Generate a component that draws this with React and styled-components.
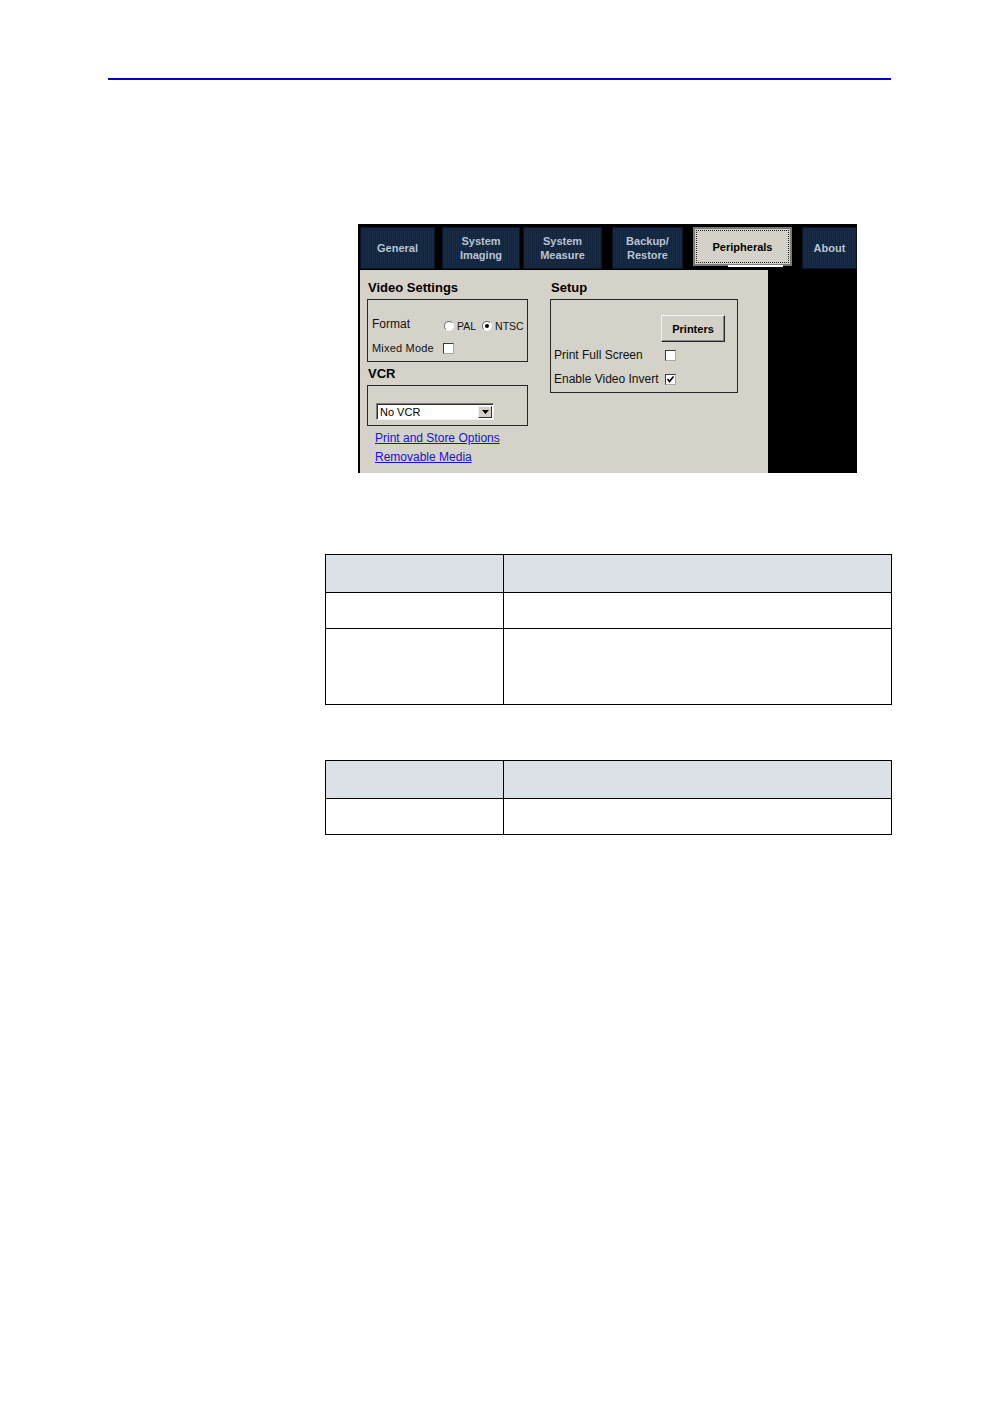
import React from 'react'
import styled, { createGlobalStyle } from 'styled-components'

const GlobalStyle = createGlobalStyle`
  html, body {
    margin: 0;
    padding: 0;
    background: #fff;
  }
  body {
    font-family: "Liberation Sans", Arial, sans-serif;
  }
`

const tabs = [
  { label: ['General'], left: 2, width: 75 },
  { label: ['System', 'Imaging'], left: 7, width: 78 },
  { label: ['System', 'Measure'], left: 3, width: 79 },
  { label: ['Backup/', 'Restore'], left: 10, width: 71 },
  { label: ['Peripherals'], left: 10, width: 99, active: true },
  { label: ['About'], left: 10, width: 55 },
]

function Radio({ checked, label }) {
  return (
    <RadioItem>
      <RadioDot checked={checked} />
      <SmallText>{label}</SmallText>
    </RadioItem>
  )
}

function Check({ checked }) {
  return (
    <CheckBox>
      {checked && (
        <svg width="9" height="9" viewBox="0 0 9 9">
          <polyline points="1.5,4 3.5,6.5 7.5,1.5" fill="none" stroke="#000" strokeWidth="1.6" />
        </svg>
      )}
    </CheckBox>
  )
}

function App() {
  return (
    <Page>
      <GlobalStyle />
      <Rule />
      <Shot>
        <TabStrip>
          {tabs.map((t) => (
            <Tab key={t.label.join(' ')} left={t.left} width={t.width} active={t.active}>
              {t.label.map((l) => (
                <span key={l}>{l}</span>
              ))}
            </Tab>
          ))}
        </TabStrip>
        <Body>
          <Panel>
            <Column>
              <GroupTitle>Video Settings</GroupTitle>
              <GroupBox padding="16px 4px 5px 4px" gap={8}>
                <Row>
                  <Label width={72}>Format</Label>
                  <RadioGroup>
                    <Radio label="PAL" />
                    <Radio checked label="NTSC" />
                  </RadioGroup>
                </Row>
                <Row>
                  <SmallLabel width={71}>Mixed Mode</SmallLabel>
                  <Check />
                </Row>
              </GroupBox>
              <GroupTitle top={3}>VCR</GroupTitle>
              <GroupBox padding="17px 8px 5px 8px">
                <Select>
                  <SelectText>No VCR</SelectText>
                  <SelectButton>
                    <svg width="7" height="4" viewBox="0 0 7 4">
                      <polygon points="0,0 7,0 3.5,4" fill="#000" />
                    </svg>
                  </SelectButton>
                </Select>
              </GroupBox>
              <Links>
                <Link href="#">Print and Store Options</Link>
                <Link href="#">Removable Media</Link>
              </Links>
            </Column>
            <Column width={188}>
              <GroupTitle>Setup</GroupTitle>
              <GroupBox padding="15px 12px 5px 3px" gap={8}>
                <ButtonRow>
                  <Button>Printers</Button>
                </ButtonRow>
                <Row top={-3}>
                  <Label width={111}>Print Full Screen</Label>
                  <Check />
                </Row>
                <Row>
                  <Label width={111}>Enable Video Invert</Label>
                  <Check checked />
                </Row>
              </GroupBox>
            </Column>
          </Panel>
          <BlackSide />
        </Body>
      </Shot>

      <Table top={81}>
        <tbody>
          <HeadRow>
            <Cell first />
            <Cell />
          </HeadRow>
          <BodyRow height={36}>
            <Cell first />
            <Cell />
          </BodyRow>
          <BodyRow height={76}>
            <Cell first />
            <Cell />
          </BodyRow>
        </tbody>
      </Table>

      <Table top={55}>
        <tbody>
          <HeadRow>
            <Cell first />
            <Cell />
          </HeadRow>
          <BodyRow height={36}>
            <Cell first />
            <Cell />
          </BodyRow>
        </tbody>
      </Table>
    </Page>
  )
}

export default App

const Page = styled.div`
  width: 998px;
  min-height: 1418px;
  background: #fff;
  padding-top: 78px;
  box-sizing: border-box;
  overflow: hidden;
`

const Rule = styled.div`
  margin-left: 108px;
  width: 783px;
  height: 2px;
  background: #0000cc;
`

const Shot = styled.div`
  margin: 144px 0 0 358px;
  width: 499px;
  height: 249px;
  background: #000;
  display: flex;
  flex-direction: column;
`

const TabStrip = styled.div`
  display: flex;
  padding-top: 3px;
  height: 46px;
  flex-shrink: 0;
  box-sizing: border-box;
`

const Tab = styled.div`
  position: relative;
  margin-left: ${(p) => p.left}px;
  width: ${(p) => p.width}px;
  height: ${(p) => (p.active ? 39 : 42)}px;
  box-sizing: border-box;
  display: flex;
  flex-direction: column;
  align-items: center;
  justify-content: center;
  font-size: 11px;
  font-weight: bold;
  line-height: 14px;
  color: ${(p) => (p.active ? '#000' : '#b8c5d4')};
  background: ${(p) =>
    p.active
      ? '#d4d1c8'
      : 'repeating-linear-gradient(90deg, #13243c 0 1px, #192c46 1px 2px)'};
  border: ${(p) => (p.active ? '2px solid #7b7b78' : '1px solid #0a1424')};
  outline: ${(p) => (p.active ? '1px dotted #222' : 'none')};
  outline-offset: -4px;

  &::after {
    content: '';
    display: ${(p) => (p.active ? 'block' : 'none')};
    position: absolute;
    left: 33px;
    bottom: -3px;
    width: 55px;
    height: 2px;
    background: #fff;
  }
`

const Body = styled.div`
  flex: 1;
  display: flex;
  padding-left: 2px;
`

const Panel = styled.div`
  width: 408px;
  background: #d5d2ca;
  display: flex;
  gap: 22px;
  padding: 9px 0 0 7px;
  box-sizing: border-box;
`

const BlackSide = styled.div`
  flex: 1;
  background: #000;
`

const Column = styled.div`
  width: ${(p) => p.width || 161}px;
  display: flex;
  flex-direction: column;
`

const GroupTitle = styled.div`
  margin-top: ${(p) => p.top || 0}px;
  margin-bottom: 2px;
  padding-left: 1px;
  font-size: 13px;
  font-weight: bold;
  line-height: 18px;
  color: #000;
`

const GroupBox = styled.div`
  border: 1px solid #262626;
  padding: ${(p) => p.padding};
  display: flex;
  flex-direction: column;
  gap: ${(p) => p.gap || 0}px;
`

const Row = styled.div`
  display: flex;
  align-items: center;
  height: 16px;
  margin-top: ${(p) => p.top || 0}px;
`

const Label = styled.span`
  width: ${(p) => p.width}px;
  flex-shrink: 0;
  font-size: 12px;
  color: #111;
  white-space: nowrap;
`

const SmallLabel = styled(Label)`
  font-size: 11px;
  letter-spacing: 0.2px;
`

const SmallText = styled.span`
  font-size: 10.5px;
  color: #111;
`

const RadioGroup = styled.div`
  display: flex;
  gap: 6px;
  padding-top: 4px;
`

const RadioItem = styled.label`
  display: flex;
  align-items: center;
  gap: 3px;
`

const RadioDot = styled.span`
  position: relative;
  width: 10px;
  height: 10px;
  border-radius: 50%;
  box-sizing: border-box;
  background: #fff;
  border: 1px solid;
  border-color: #6f6f6f #f4f4f4 #f4f4f4 #6f6f6f;

  &::after {
    content: '';
    display: ${(p) => (p.checked ? 'block' : 'none')};
    position: absolute;
    left: 2px;
    top: 2px;
    width: 4px;
    height: 4px;
    border-radius: 50%;
    background: #000;
  }
`

const CheckBox = styled.span`
  width: 11px;
  height: 11px;
  box-sizing: border-box;
  background: #fff;
  border: 1px solid;
  border-color: #3c3c3c #a9a9a9 #a9a9a9 #3c3c3c;
  display: flex;
  align-items: center;
  justify-content: center;
`

const Select = styled.div`
  width: 118px;
  height: 17px;
  box-sizing: border-box;
  background: #fff;
  border: 1px solid;
  border-color: #7c7c7c #f0f0f0 #f0f0f0 #7c7c7c;
  box-shadow: inset 1px 1px 0 #303030;
  display: flex;
  align-items: center;
  justify-content: space-between;
  padding: 0 1px 0 3px;
`

const SelectText = styled.span`
  font-size: 11px;
  color: #000;
`

const SelectButton = styled.span`
  width: 14px;
  height: 12px;
  box-sizing: border-box;
  background: #d4d0c8;
  border: 1px solid;
  border-color: #f4f4f4 #303030 #303030 #f4f4f4;
  display: flex;
  align-items: center;
  justify-content: center;
`

const Links = styled.div`
  margin-top: 3px;
  padding-left: 8px;
  display: flex;
  flex-direction: column;
`

const Link = styled.a`
  font-size: 12px;
  line-height: 19px;
  color: #1414d8;
  text-decoration: underline;
`

const ButtonRow = styled.div`
  display: flex;
  justify-content: flex-end;
`

const Button = styled.button`
  width: 64px;
  height: 27px;
  padding: 0;
  background: #d4d1c9;
  border: 1px solid;
  border-color: #f4f4f4 #262626 #262626 #f4f4f4;
  box-shadow: inset -1px -1px 0 #8a8a8a;
  font-family: "Liberation Sans", Arial, sans-serif;
  font-size: 11px;
  font-weight: bold;
  color: #000;
`

const Table = styled.table`
  margin: ${(p) => p.top}px 0 0 325px;
  width: 567px;
  border-collapse: collapse;
`

const HeadRow = styled.tr`
  height: 38px;
  background: #dbe1e6;
`

const BodyRow = styled.tr`
  height: ${(p) => p.height}px;
  background: #fff;
`

const Cell = styled.td`
  width: ${(p) => (p.first ? '177px' : 'auto')};
  border: 1.5px solid #000;
  padding: 0;
`
